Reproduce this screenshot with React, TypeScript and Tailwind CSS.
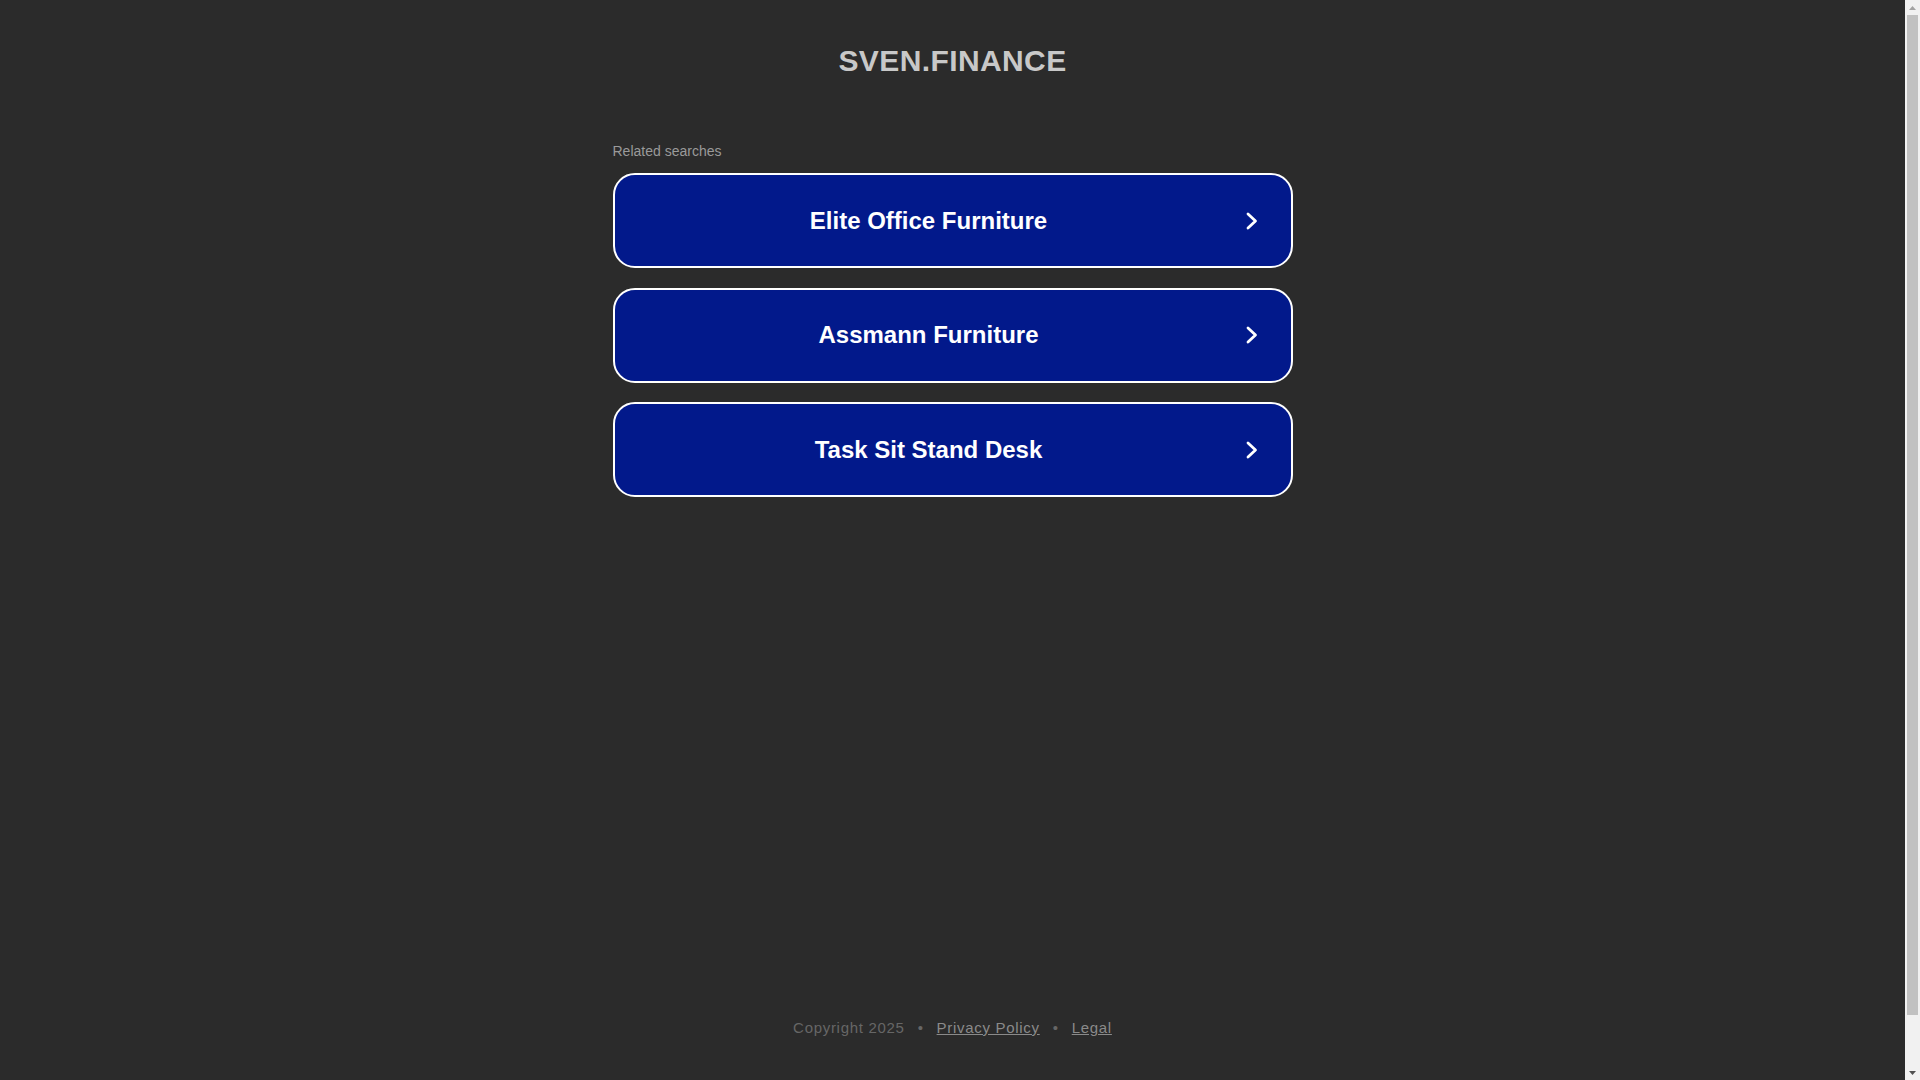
const searches = ["Elite Office Furniture", "Assmann Furniture", "Task Sit Stand Desk"];

function Chevron() {
  return (
    <svg width="12" height="18" viewBox="0 0 12 18" fill="none" className="shrink-0">
      <path d="M2 2l7.5 7L2 16" stroke="white" strokeWidth="2.8" strokeLinecap="round" strokeLinejoin="round" />
    </svg>
  );
}

function SearchCard({ label }: { label: string }) {
  return (
    <a
      href="#"
      className="flex h-[95px] items-center rounded-[22px] border-2 border-white bg-[#02198b] text-white"
    >
      <span className="flex-1 text-center text-[24px] font-bold leading-normal">{label}</span>
      <span className="ml-[3px] mr-[33px] flex">
        <Chevron />
      </span>
    </a>
  );
}

// the browser's classic scrollbar, as seen in the shot
function Scrollbar() {
  return (
    <div className="flex w-[15px] shrink-0 flex-col bg-[#f1f1f1]">
      <div className="flex h-[15px] items-center justify-center">
        <svg width="7" height="4" viewBox="0 0 7 4">
          <path d="M3.5 0L7 4H0z" fill="#a3a3a3" />
        </svg>
      </div>
      <div className="flex-1">
        <div className="mx-[2px] h-[1000px] bg-[#c1c1c1]" />
      </div>
      <div className="flex h-[15px] items-center justify-center">
        <svg width="7" height="4" viewBox="0 0 7 4">
          <path d="M0 0h7L3.5 4z" fill="#505050" />
        </svg>
      </div>
    </div>
  );
}

export default function App() {
  return (
    <div className="flex h-[1080px] overflow-hidden bg-[#2b2b2b] font-['Liberation_Sans',Arial,sans-serif]">
      <div className="flex flex-1 flex-col">
        <header className="pt-[38px] text-center">
          <h1 className="text-[30px] font-bold leading-normal tracking-[0.4px] text-[#c8c8c8]">SVEN.FINANCE</h1>
        </header>

        <main className="mx-auto mt-[58px] w-[680px]">
          <div className="text-[14px] leading-normal text-[#9a9a9a]">Related searches</div>
          <div className="mt-[11px] flex flex-col gap-[19.5px]">
            {searches.map((item) => (
              <SearchCard key={item} label={item} />
            ))}
          </div>
        </main>

        <footer className="mt-auto pb-[41px] text-center text-[15px] leading-normal tracking-[0.7px] text-[#666666]">
          <span>Copyright 2025</span>
          <span className="mx-[13px]">•</span>
          <a href="#" className="text-[#8a8a8a] underline">
            Privacy Policy
          </a>
          <span className="mx-[13px]">•</span>
          <a href="#" className="text-[#8a8a8a] underline">
            Legal
          </a>
        </footer>
      </div>
      <Scrollbar />
    </div>
  );
}
